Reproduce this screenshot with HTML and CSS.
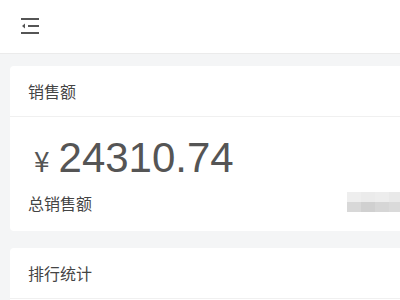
FILE: index.html
```html
<!DOCTYPE html>
<html lang="zh">
<head>
<meta charset="utf-8">
<link rel="stylesheet" href="styles.css">
</head>
<body>
<header class="topbar">
  <svg class="fold" width="20" height="18" viewBox="0 0 20 18">
    <rect x="1" y="1" width="18" height="2" fill="#555"/>
    <rect x="8" y="8" width="11" height="2" fill="#555"/>
    <path d="M2 9 L5 6.5 L5 11.5 Z" fill="#555"/>
    <rect x="1" y="15" width="18" height="2" fill="#555"/>
  </svg>
</header>
<main class="content">
  <section class="card">
    <div class="card-head">销售额</div>
    <div class="card-body">
      <div class="amount"><span class="yen">¥</span>24310.74</div>
      <div class="row">
        <span class="label">总销售额</span>
        <span class="mosaic">
          <i class="m1"></i><i class="m2"></i><i class="m3"></i><i class="m4"></i>
          <i class="m5"></i><i class="m6"></i><i class="m7"></i><i class="m8"></i>
        </span>
      </div>
    </div>
  </section>
  <section class="card">
    <div class="card-head">排行统计</div>
    <div class="card-body tall"></div>
  </section>
</main>
</body>
</html>
```
FILE: styles.css
```css
html, body {
  margin: 0;
  padding: 0;
  overflow: hidden;
  background: #f4f5f6;
  font-family: "Noto Sans CJK SC", "Liberation Sans", sans-serif;
}
.topbar {
  height: 54px;
  background: #fff;
  border-bottom: 1px solid #ebebeb;
  display: flex;
  align-items: center;
  padding-left: 20px;
  box-sizing: border-box;
}
.fold { display: block; margin-top: -1px; }
.content {
  padding: 12px 10px;
  display: flex;
  flex-direction: column;
  gap: 17px;
  width: 440px;
}
.card {
  background: #fff;
  border-radius: 4px;
}
.card-head {
  height: 50px;
  border-bottom: 1px solid #f0f0f0;
  display: flex;
  align-items: center;
  padding-left: 18px;
  font-size: 16px;
  color: #444;
}
.card-body {
  padding: 16px 18px 16px;
}
.card-body.tall { height: 200px; }
.amount {
  font-family: "Liberation Sans", Arial, sans-serif;
  font-size: 42px;
  line-height: 50px;
  color: #555;
  padding-left: 6px;
  white-space: nowrap;
}
.yen {
  font-family: "Noto Sans CJK SC", sans-serif;
  font-size: 28px;
  margin-right: 9px;
}
.row {
  display: flex;
  align-items: center;
  margin-top: 6px;
  height: 24px;
}
.label {
  font-size: 16px;
  color: #444;
  white-space: nowrap;
  flex-shrink: 0;
}
.mosaic {
  margin-left: 255px;
  flex-shrink: 0;
  display: grid;
  grid-template-columns: repeat(4, 14px);
  grid-template-rows: 10px 10px;
  margin-top: -2px;
}
.mosaic i { display: block; }
.m1 { background: #eeeeee; }
.m2 { background: #ebebeb; }
.m3 { background: #ededed; }
.m4 { background: #e9e9e9; }
.m5 { background: #d8d8d8; }
.m6 { background: #d0d0d0; }
.m7 { background: #d6d6d6; }
.m8 { background: #dadada; }
```
